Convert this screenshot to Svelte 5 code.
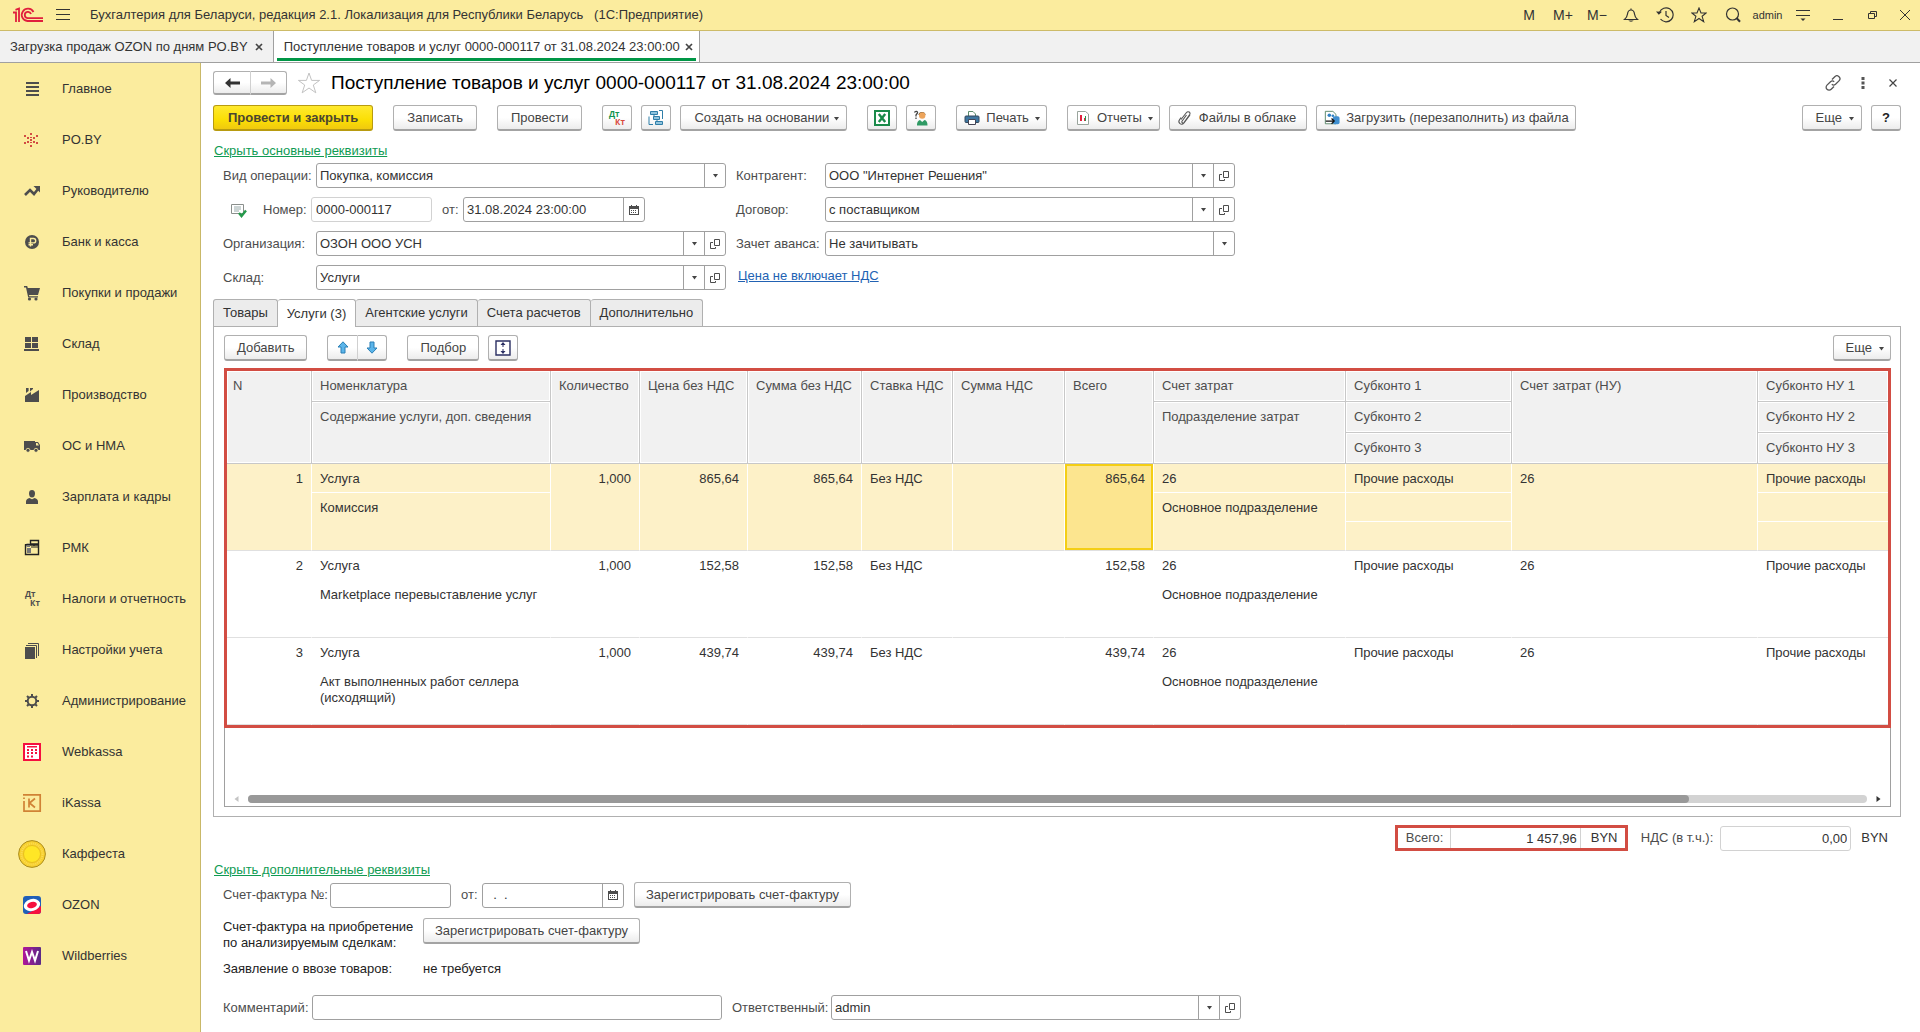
<script>
  const menu = [
    ['main', 'Главное'],
    ['po', 'PO.BY'],
    ['trend', 'Руководителю'],
    ['ruble', 'Банк и касса'],
    ['cart', 'Покупки и продажи'],
    ['stock', 'Склад'],
    ['factory', 'Производство'],
    ['truck', 'ОС и НМА'],
    ['person', 'Зарплата и кадры'],
    ['pos', 'РМК'],
    ['dtkt', 'Налоги и отчетность'],
    ['books', 'Настройки учета'],
    ['gear', 'Администрирование'],
    ['webkassa', 'Webkassa'],
    ['ikassa', 'iKassa'],
    ['coin', 'Каффеста'],
    ['ozon', 'OZON'],
    ['wb', 'Wildberries'],
  ];

  const tabs = ['Товары', 'Услуги (3)', 'Агентские услуги', 'Счета расчетов', 'Дополнительно'];
  let active = $state(1);

  const rows = [
    { n: 1, text: 'Комиссия', sum: '865,64' },
    { n: 2, text: 'Marketplace перевыставление услуг', sum: '152,58' },
    { n: 3, text: 'Акт выполненных работ селлера (исходящий)', sum: '439,74' },
  ];
  let selected = $state(1);
</script>

{#snippet icon(name)}
  {#if name === 'main'}
    <svg width="28" height="28" viewBox="0 0 28 28"><path fill="#4d4d4d" d="M8 7h13v2H8zM8 11h13v2H8zM8 15h13v2H8zM8 19h13v2H8z" /></svg>
  {:else if name === 'po'}
    <svg width="28" height="28" viewBox="0 0 28 28" fill="#d24d43"><path d="M12 7h2v2h-2zM12 11h2v1h-2zM12 13h2v2h-2zM12 16h2v1h-2zM12 19h2v2h-2zM9 11h2v2H9zM15 11h2v2h-2zM9 15h2v2H9zM15 15h2v2h-2zM6 9h2v2H6zM18 9h2v2h-2zM6 16h2v2H6zM18 16h2v2h-2z" /></svg>
  {:else if name === 'trend'}
    <svg width="28" height="28" viewBox="0 0 28 28"><path fill="none" stroke="#4d4d4d" stroke-width="2.600" d="M7 18l5-5 4 4 4-5" /><path fill="#4d4d4d" d="M15.500 9H22v6.500z" /></svg>
  {:else if name === 'ruble'}
    <svg width="28" height="28" viewBox="0 0 28 28"><circle cx="14" cy="14" r="7" fill="#4d4d4d" /><path fill="none" stroke="#fbec9e" stroke-width="1.400" d="M12.500 18.500v-8h3a2.200 2.200 0 010 4.400h-5M10.500 16.700h4.500" /></svg>
  {:else if name === 'cart'}
    <svg width="28" height="28" viewBox="0 0 28 28"><path fill="#4d4d4d" d="M6 7h3.200l.6 2H22l-2 7H11l.3 1.200H20v1.300h-9.800L8 8.500H6z" /><circle cx="11.500" cy="20" r="1.600" fill="#4d4d4d" /><circle cx="18" cy="20" r="1.600" fill="#4d4d4d" /></svg>
  {:else if name === 'stock'}
    <svg width="28" height="28" viewBox="0 0 28 28"><path fill="#4d4d4d" d="M7 7h6v5H7zM14 7h6v5h-6zM7 13h6v5H7zM14 13h6v5h-6zM6 19h15v2H6z" /></svg>
  {:else if name === 'factory'}
    <svg width="28" height="28" viewBox="0 0 28 28"><path fill="#4d4d4d" d="M7 21v-6l6-4v3l8-5v12zM8 7h2.600v3L8 12zM12 7h3v1l-3 2.500z" /></svg>
  {:else if name === 'truck'}
    <svg width="28" height="28" viewBox="0 0 28 28"><path fill="#4d4d4d" fill-rule="evenodd" d="M6 9h11v1h3l2 3v5H6zM18 11v2.500h3L19.500 11z" /><circle cx="10" cy="18.300" r="2" fill="#4d4d4d" stroke="#fbec9e" stroke-width=".8" /><circle cx="18" cy="18.300" r="2" fill="#4d4d4d" stroke="#fbec9e" stroke-width=".8" /></svg>
  {:else if name === 'person'}
    <svg width="28" height="28" viewBox="0 0 28 28"><path fill="#4d4d4d" d="M14 7c2 0 3 1.300 3 3.400S16 14.600 14 14.600s-3-2-3-4.200S12 7 14 7zM8 21v-2.500C8 16.500 9.500 15.500 11.500 15l2.500 1.300 2.500-1.300c2 .5 3.500 1.500 3.500 3.500V21z" /></svg>
  {:else if name === 'pos'}
    <svg width="28" height="28" viewBox="0 0 28 28"><path fill="#fbec9e" stroke="#222" stroke-width="1.400" d="M12.500 6.500h8V10h-8zM7.500 11h13v9.500h-13zM16 10v2" /><path fill="#777" d="M8.500 9.500H12V13H8.500zM9 14h4v5H9z" /><path stroke="#222" stroke-width="1" d="M7 10.500h5M13 13h7" /></svg>
  {:else if name === 'dtkt'}
    <svg width="28" height="28" viewBox="0 0 28 28" font-family="Open Sans, sans-serif" font-weight="700" font-size="8" fill="#4d4d4d"><text x="7" y="12">Дт</text><text x="12" y="21">Кт</text></svg>
  {:else if name === 'books'}
    <svg width="28" height="28" viewBox="0 0 28 28"><path fill="#4d4d4d" d="M7 11h10v12H7z" /><path fill="none" stroke="#4d4d4d" d="M8 9.500h10.500V22M10 7.500h10.500V20" /></svg>
  {:else if name === 'gear'}
    <svg width="28" height="28" viewBox="0 0 28 28"><circle cx="14" cy="14" r="4.300" fill="none" stroke="#4d4d4d" stroke-width="2" /><path stroke="#4d4d4d" stroke-width="2" d="M14 7v2.500M14 18.500V21M7 14h2.500M18.500 14H21M9 9l1.800 1.800M17.200 17.200L19 19M19 9l-1.800 1.800M10.800 17.200L9 19" /></svg>
  {:else if name === 'webkassa'}
    <svg width="28" height="28" viewBox="0 0 28 28"><path fill="#fff" stroke="#f5103f" stroke-width="2" d="M6 6h16v16H6z" /><path fill="#f5103f" d="M9 8h10v1.500H9zM9 11h2v2H9zM13 11h2v2h-2zM17 11h2v2h-2zM9 14h2v2H9zM13 14h2v2h-2zM17 14h2v2h-2zM9 17.500h2v2H9zM13 17.500h2v2h-2z" /></svg>
  {:else if name === 'ikassa'}
    <svg width="28" height="28" viewBox="0 0 28 28"><path fill="none" stroke="#d08235" stroke-width="1.700" d="M5 5.800h17.200v16.400H6V12M6 10V8.500M11 9.500v9M17 9.500l-5.500 4.500 5.500 4.500" /></svg>
  {:else if name === 'coin'}
    <svg width="28" height="28" viewBox="0 0 28 28"><circle cx="14" cy="14" r="13.400" fill="#f7cf2e" stroke="#ab8d20" /><circle cx="14" cy="14" r="10.500" fill="none" stroke="#fbdc55" stroke-width="2" stroke-dasharray="1 1" /><circle cx="14" cy="14" r="8.500" fill="#ffe626" stroke="#e8bf20" /></svg>
  {:else if name === 'ozon'}
    <svg width="28" height="28" viewBox="0 0 28 28"><rect x="5" y="5" width="18" height="18" rx="3" fill="#1f5fb8" /><path fill="#f5103f" d="M23 15v5a3 3 0 01-3 3H9z" /><ellipse cx="14" cy="14" rx="8.300" ry="6" fill="#fff" transform="rotate(-15 14 14)" /><ellipse cx="14" cy="14" rx="5" ry="3" fill="#f5103f" transform="rotate(-15 14 14)" /></svg>
  {:else if name === 'wb'}
    <svg width="28" height="28" viewBox="0 0 28 28"><defs><linearGradient id="wbg"><stop offset="0" stop-color="#b0159a" /><stop offset="1" stop-color="#5a2a86" /></linearGradient></defs><rect x="5" y="5" width="18" height="18" rx="1" fill="url(#wbg)" /><path fill="none" stroke="#fff" stroke-width="2" d="M8 9l3 9.500L14 10l3 8.500L20 9" /></svg>
  {/if}
{/snippet}

{#snippet cross()}
  <svg width="8" height="8" viewBox="0 0 8 8"><path stroke="#444" stroke-width="1.700" d="M1 1l6 6M7 1L1 7" /></svg>
{/snippet}

{#snippet caret()}
  <svg class="caret" width="7" height="4" viewBox="0 0 7 4"><path fill="#444" d="M1 0h5L3.500 3.500z" /></svg>
{/snippet}

{#snippet openIcon()}
  <svg width="10" height="10" viewBox="0 0 10 10"><path fill="none" stroke="#4d4d4d" d="M4.500.5h5v6h-5zM3 3.500H.5v6h5V8" /></svg>
{/snippet}

{#snippet calendar()}
  <svg width="10" height="10" viewBox="0 0 10 10"><path fill="#4d4d4d" fill-rule="evenodd" d="M0 1h2V0h1v1h4V0h1v1h2v9H0zM1 4v5h8V4z" /><path fill="#4d4d4d" d="M2 5h1v1H2zM4 5h1v1H4zM6 5h1v1H6zM2 7h1v1H2zM4 7h1v1H4zM6 7h1v1H6z" /></svg>
{/snippet}

{#snippet pick(id, value, open)}
  <div class="field">
    <div class="pick">
      <select {id}><option>{value}</option></select>
      <span class="cell">{@render caret()}</span>
    </div>
    {#if open}
      <button class="cell" aria-label="Открыть">{@render openIcon()}</button>
    {/if}
  </div>
{/snippet}

<div class="app">
  <header class="titlebar">
    <svg class="logo" width="30" height="16" viewBox="0 0 30 16" fill="none" stroke="#e01f3d" stroke-width="1.800"><path d="M0 5.500h3V15M2.500 2.800L6 1.500V15" /><path d="M20.500 5A6.200 6.200 0 1014.500 14H30M18 7a3.200 3.200 0 10-3.500 4.200H30" /></svg>
    <button class="plain burger" aria-label="Меню">
      <svg width="16" height="14" viewBox="0 0 16 14"><path stroke="#333" d="M1 1.500h14M1 6.500h14M1 11.500h14" /></svg>
    </button>
    <span class="apptitle">Бухгалтерия для Беларуси, редакция 2.1. Локализация для Республики Беларусь &nbsp;&nbsp;(1С:Предприятие)</span>
    <div class="tools">
      <button class="plain">M</button>
      <button class="plain">M+</button>
      <button class="plain">M−</button>
      <button class="plain" aria-label="Уведомления"><svg width="16" height="16" viewBox="0 0 16 16"><path fill="none" stroke="#333" stroke-width="1.200" d="M1.500 12.500h13c-2-1.700-2.700-2.800-3-5.500-.3-2.500-1.500-4-3.500-4s-3.200 1.500-3.500 4c-.3 2.700-1 3.800-3 5.500zM8 3V1.500" /><path fill="#333" d="M5.500 13.500h5c-.5 1.500-4.500 1.500-5 0z" /></svg></button>
      <button class="plain" aria-label="История"><svg width="18" height="16" viewBox="0 0 18 16"><path fill="none" stroke="#333" stroke-width="1.200" d="M3.500 5.500a7 7 0 111 6.500M10 4v4.500l3 2" /><path fill="#333" d="M0 4.500l6 .3-3.200 3z" /></svg></button>
      <button class="plain" aria-label="Избранное"><svg width="16" height="16" viewBox="0 0 16 16"><path fill="none" stroke="#333" stroke-width="1.100" d="M8 1l2 5h5.200l-4.100 3.300 1.600 5.400L8 11.500l-4.700 3.200 1.600-5.400L.8 6H6z" /></svg></button>
      <button class="plain" aria-label="Поиск"><svg width="16" height="16" viewBox="0 0 16 16"><circle cx="7.500" cy="7" r="6" fill="none" stroke="#333" stroke-width="1.200" /><path stroke="#333" stroke-width="2" d="M11.500 11l3.500 3.800" /></svg></button>
    </div>
    <div class="tools wide">
      <button class="plain user">admin</button>
      <button class="plain" aria-label="Настройки"><svg width="16" height="14" viewBox="0 0 16 14"><path stroke="#333" d="M1 2.500h14M1 7.500h14" /><path fill="#333" d="M5.500 10.500h5L8 13z" /></svg></button>
      <button class="plain" aria-label="Свернуть"><svg width="12" height="12" viewBox="0 0 12 12"><path stroke="#333" d="M1 10.500h10" /></svg></button>
      <button class="plain" aria-label="Восстановить"><svg width="10" height="10" viewBox="0 0 10 10"><path fill="none" stroke="#333" d="M.5 3.500h6v5h-6zM2.500 3V1.500h6v5H7" /></svg></button>
      <button class="plain last" aria-label="Закрыть"><svg width="12" height="12" viewBox="0 0 12 12"><path stroke="#333" d="M1 1l10 10M11 1L1 11" /></svg></button>
    </div>
  </header>

  <nav class="wintabs">
    <div class="wintab"><a href="#ozon">Загрузка продаж OZON по дням PO.BY</a><button class="plain close" aria-label="Закрыть вкладку">{@render cross()}</button></div>
    <div class="wintab current"><a href="#doc">Поступление товаров и услуг 0000-000117 от 31.08.2024 23:00:00</a><button class="plain close" aria-label="Закрыть вкладку">{@render cross()}</button></div>
  </nav>

  <div class="body">
    <nav class="side">
      {#each menu as [name, label]}
        <a href="#{name}"><span class="ico">{@render icon(name)}</span>{label}</a>
      {/each}
    </nav>

    <main>
      <div class="head">
        <div class="split">
          <button aria-label="Назад"><svg width="15" height="10" viewBox="0 0 15 10"><path fill="#333" d="M0 5l5.500-5v3.500H15v3H5.500V10z" /></svg></button>
          <button aria-label="Вперед"><svg width="15" height="10" viewBox="0 0 15 10"><path fill="#b5b5b5" d="M15 5L9.500 0v3.500H0v3h9.500V10z" /></svg></button>
        </div>
        <button class="plain star" aria-label="В избранное"><svg width="24" height="24" viewBox="0 0 24 24"><path fill="none" stroke="#c2c2c2" d="M12 2l2.600 7.400h8L16.300 14l2.500 7.800L12 17l-6.800 4.800L7.700 14 1.400 9.400h8z" /></svg></button>
        <h1>Поступление товаров и услуг 0000-000117 от 31.08.2024 23:00:00</h1>
        <div class="headtools">
          <button class="plain" aria-label="Ссылка"><svg width="16" height="16" viewBox="0 0 16 16"><path fill="none" stroke="#555" stroke-width="1.300" d="M7 4.500l2.800-2.800a2.800 2.800 0 014.200 4.200L10.500 9.300a2.800 2.800 0 01-3.700 0M9 11.500l-2.800 2.800A2.800 2.800 0 012 10.100l3.500-3.400a2.800 2.800 0 013.700 0" /></svg></button>
          <button class="plain" aria-label="Меню формы"><svg width="4" height="12" viewBox="0 0 4 12"><path fill="#555" d="M.5 0h3v3h-3zM.5 4.500h3v3h-3zM.5 9h3v3h-3z" /></svg></button>
          <button class="plain" aria-label="Закрыть форму"><svg width="8" height="8" viewBox="0 0 8 8"><path stroke="#444" stroke-width="1.200" d="M.5.5l7 7M7.500.5l-7 7" /></svg></button>
        </div>
      </div>

      <div class="bar">
        <button class="btn primary">Провести и закрыть</button>
        <button class="btn">Записать</button>
        <button class="btn">Провести</button>
        <div class="group">
          <button class="btn sq" aria-label="Показать проводки"><svg width="18" height="18" viewBox="0 0 18 18" font-family="Open Sans, sans-serif" font-weight="700" font-size="8"><text x="1" y="8" fill="#12934f">Дт</text><text x="7" y="16" fill="#d9483b">Кт</text></svg></button>
          <button class="btn sq" aria-label="Структура подчиненности"><svg width="16" height="16" viewBox="0 0 16 16" fill="#8fc3dd" stroke="#2f7ea8"><path d="M2.500 1.500h7v3h-7zM5.500 6.500h6v3h-6zM7.500 11.500h7v3h-7z" /><path fill="none" d="M1 6.500v8h4M11 .5h3.500V9M6 4.500v2M9 9.500v2" /></svg></button>
          <button class="btn">Создать на основании {@render caret()}</button>
        </div>
        <div class="group">
          <button class="btn sq" aria-label="Excel"><svg width="16" height="16" viewBox="0 0 16 16"><path fill="#fff" stroke="#1a8a4a" stroke-width="2" d="M1 1h14v14H1z" /><path stroke="#1a8a4a" stroke-width="2.400" d="M4.800 4l6.400 8M11.200 4l-6.400 8" /></svg></button>
          <button class="btn sq" aria-label="Помощник"><svg width="16" height="16" viewBox="0 0 16 16"><path fill="none" stroke="#444" stroke-width="1.300" d="M1.500 2.500C2 1 5 1 4.500 3L3 5v1.500M3 7.500V9" /><path fill="#4a3a20" d="M5.500 5c0-4 7-4 7 0z" /><circle cx="9.200" cy="5.500" r="3.200" fill="#eda45b" /><path fill="#2f9a64" d="M4 15.500c0-4 1.500-5 3-5.500l2.200 2L11.500 10c2 .5 3 2 3 5.500z" /></svg></button>
        </div>
        <button class="btn pic"><svg width="16" height="16" viewBox="0 0 16 16"><path fill="#fff" stroke="#5d8c6c" d="M4.500 6V1.500H9L11.500 4v2" /><rect x="1" y="6" width="14" height="6.500" rx="1" fill="#3e77a0" stroke="#34495e" /><path fill="#fff" stroke="#445" d="M4.500 9.500h7v5h-7z" /></svg>Печать {@render caret()}</button>
        <div class="group">
          <button class="btn pic"><svg width="16" height="16" viewBox="0 0 16 16"><path fill="#fff" stroke="#9aa59d" d="M2.500 1.500h8L13.500 4v10.500h-11z" /><path fill="#e0213c" d="M5 5h1v6H5zM9 8h2v3H9z" /><path fill="#209a4c" d="M10 6h1v5h-1z" /><path fill="#e0213c" d="M6 5h1v6H6z" /></svg>Отчеты {@render caret()}</button>
          <button class="btn pic"><svg width="16" height="16" viewBox="0 0 14 16"><path fill="none" stroke="#555" stroke-width="1.100" d="M3 9.500l5.500-7c1.500-1.800 4.500 0 3.200 2L6 12.500c-1 1.200-2.800 0-2-1.200L8.500 5M3 7.500l-1.500 2.300c-2 3 1.800 6.200 4.500 3.200l6-8" /></svg>Файлы в облаке</button>
          <button class="btn pic load"><svg width="16" height="16" viewBox="0 0 18 16"><path fill="#fff" stroke="#4f8060" d="M1.500.5H10L13.500 4v10.500h-12z" /><circle cx="6" cy="5" r="2" fill="#3182c4" /><circle cx="10" cy="5.500" r="1.500" fill="#3182c4" /><rect x="10" y="6" width="7.500" height="9" rx="2" fill="#3f8fd0" /><path fill="none" stroke="#111" stroke-width="1.400" d="M2 11.500h9M8.500 8.500l3 3-3 3" /></svg>Загрузить (перезаполнить) из файла</button>
        </div>
        <div class="group push">
          <button class="btn">Еще {@render caret()}</button>
          <button class="btn sq help">?</button>
        </div>
      </div>

      <a class="toggle" href="#main-fields">Скрыть основные реквизиты</a>

      <div class="form">
        <label for="op">Вид операции:</label>
        {@render pick('op', 'Покупка, комиссия', false)}
        <label for="agent" class="second">Контрагент:</label>
        {@render pick('agent', 'ООО "Интернет Решения"', true)}

        <div class="numline">
          <svg width="16" height="16" viewBox="0 0 16 16"><path fill="#fff" stroke="#8a8f8c" d="M.5 2.500h12v9H.500z" /><path stroke="#9aa" d="M3 5h7M3 7h7M3 9h5" /><path fill="none" stroke="#259a4b" stroke-width="2.400" d="M8 11l2.500 3L15 8.500" /></svg>
          <label for="num">Номер:</label>
          <input id="num" class="box soft num" value="0000-000117" readonly />
          <label for="dt">от:</label>
          <div class="field date"><input id="dt" value="31.08.2024 23:00:00" /><button class="cell" aria-label="Выбрать дату">{@render calendar()}</button></div>
        </div>
        <label for="contract" class="second">Договор:</label>
        {@render pick('contract', 'с поставщиком', true)}

        <label for="org">Организация:</label>
        {@render pick('org', 'ОЗОН ООО УСН', true)}
        <label for="adv" class="second">Зачет аванса:</label>
        {@render pick('adv', 'Не зачитывать', false)}

        <label for="wh">Склад:</label>
        {@render pick('wh', 'Услуги', true)}
        <a class="price" href="#price">Цена не включает НДС</a>
      </div>

      <div class="tabs" role="tablist">
        {#each tabs as t, i}
          <button role="tab" aria-selected={active === i} class:on={active === i} onclick={() => (active = i)}>{t}</button>
        {/each}
      </div>

      <section class="panel">
        <div class="bar inner">
          <button class="btn">Добавить</button>
          <div class="split tall">
            <button aria-label="Вверх"><svg width="12" height="13" viewBox="0 0 12 13"><path fill="#5bb5ea" stroke="#2a7fb5" d="M6 .8l5 5.200H8v6H4V6H1z" /></svg></button>
            <button aria-label="Вниз"><svg width="12" height="13" viewBox="0 0 12 13"><path fill="#5bb5ea" stroke="#2a7fb5" d="M6 12.200L1 7h3V1h4v6h3z" /></svg></button>
          </div>
          <div class="group">
            <button class="btn">Подбор</button>
            <button class="btn sq" aria-label="Высота строк"><svg width="16" height="16" viewBox="0 0 16 16"><path fill="#fff" stroke="#2b2f63" stroke-width="1.400" d="M1 1h14v14H1z" /><path fill="#2b2f63" d="M8 2l2.500 3h-5zM8 14l2.500-3h-5zM7.500 5h1v2h-1zM7.500 9h1v2h-1z" /></svg></button>
          </div>
          <button class="btn push">Еще {@render caret()}</button>
        </div>

        <div class="list">
          <div class="frame">
            <table>
              <colgroup>
                <col class="c1" /><col class="c2" /><col class="c3" /><col class="c4" /><col class="c5" /><col class="c6" /><col class="c7" /><col class="c8" /><col class="c9" /><col class="c10" /><col /><col class="c12" />
              </colgroup>
              <thead>
                <tr>
                  <th rowspan="3">N</th><th>Номенклатура</th><th rowspan="3">Количество</th><th rowspan="3">Цена без НДС</th><th rowspan="3">Сумма без НДС</th><th rowspan="3">Ставка НДС</th><th rowspan="3">Сумма НДС</th><th rowspan="3">Всего</th><th>Счет затрат</th><th>Субконто 1</th><th rowspan="3">Счет затрат (НУ)</th><th>Субконто НУ 1</th>
                </tr>
                <tr><th rowspan="2">Содержание услуги, доп. сведения</th><th rowspan="2">Подразделение затрат</th><th>Субконто 2</th><th>Субконто НУ 2</th></tr>
                <tr><th>Субконто 3</th><th>Субконто НУ 3</th></tr>
              </thead>
              {#each rows as r}
                <tbody class:sel={selected === r.n} onclick={() => (selected = r.n)}>
                  <tr>
                    <td rowspan="3" class="r">{r.n}</td><td>Услуга</td><td rowspan="3" class="r">1,000</td><td rowspan="3" class="r">{r.sum}</td><td rowspan="3" class="r">{r.sum}</td><td rowspan="3">Без НДС</td><td rowspan="3"></td><td rowspan="3" class="r total">{r.sum}</td><td>26</td><td>Прочие расходы</td><td rowspan="3">26</td><td>Прочие расходы</td>
                  </tr>
                  <tr><td rowspan="2">{r.text}</td><td rowspan="2">Основное подразделение</td><td></td><td></td></tr>
                  <tr><td></td><td></td></tr>
                </tbody>
              {/each}
            </table>
          </div>
          <div class="scroll">
            <svg width="5" height="8" viewBox="0 0 5 8"><path fill="#c4c4c4" d="M4.500 1v6L.5 4z" /></svg>
            <div class="track"><div class="thumb"></div></div>
            <svg width="5" height="8" viewBox="0 0 5 8"><path fill="#333" d="M.5 1v6l4-3z" /></svg>
          </div>
        </div>
      </section>

      <div class="totals">
        <div class="redbox"><label for="sum">Всего:</label><input id="sum" value="1 457,96" readonly /><span>BYN</span></div>
        <label for="vat">НДС (в т.ч.):</label>
        <input id="vat" class="box soft vat" value="0,00" readonly />
        <span class="cur">BYN</span>
      </div>

      <a class="toggle extra" href="#extra-fields">Скрыть дополнительные реквизиты</a>

      <div class="line inv">
        <label class="l1" for="inv">Счет-фактура №:</label>
        <input id="inv" class="box num" />
        <label class="from" for="invdt">от:</label>
        <div class="field short"><input id="invdt" value="&nbsp;&nbsp;.&nbsp;&nbsp;." /><button class="cell" aria-label="Выбрать дату">{@render calendar()}</button></div>
        <button class="btn reg">Зарегистрировать счет-фактуру</button>
      </div>
      <div class="line buy">
        <span class="dark l2">Счет-фактура на приобретение<br />по анализируемым сделкам:</span>
        <button class="btn long">Зарегистрировать счет-фактуру</button>
      </div>
      <div class="line import"><span class="dark l2">Заявление о ввозе товаров:</span><span class="dark">не требуется</span></div>
      <div class="line last-line">
        <label class="l3" for="com">Комментарий:</label>
        <input id="com" class="box com" />
        <label class="l4" for="resp">Ответственный:</label>
        {@render pick('resp', 'admin', true)}
      </div>
    </main>
  </div>
</div>

<style>
  :global(body) { margin: 0; }
  .app {
    min-height: 100vh;
    display: flex;
    flex-direction: column;
    background: #fff;
    color: #333;
    font: 13px/16px "Liberation Sans", Arial, sans-serif;
  }
  button, input, select { font: inherit; color: inherit; box-sizing: border-box; margin: 0; }
  svg { display: block; flex: none; }
  .plain { border: 0; background: none; padding: 0; display: flex; align-items: center; justify-content: center; }

  .titlebar { display: flex; align-items: center; height: 30px; background: #fbec9e; border-bottom: 1px solid #cdbb68; }
  .logo { margin-left: 13px; }
  .burger { margin: 0 19px 0 12px; }
  .tools { margin-left: auto; display: flex; }
  .tools button { width: 34px; height: 30px; font-size: 14px; }
  .tools.wide { margin-left: 0; }
  .tools.wide button { width: 35px; }
  .tools.wide .last { width: 30px; }
  .tools .user { font-size: 11px; }

  .wintabs { display: flex; height: 31px; background: #f1f1f1; border-bottom: 1px solid #a0a0a0; }
  .wintab { display: flex; align-items: center; gap: 7px; padding: 0 10px; border-right: 1px solid #a0a0a0; }
  .wintab a { color: #333; text-decoration: none; }
  .wintab.current { gap: 5px; padding: 0 6px 0 10px; background: linear-gradient(#009646, #009646) 50% 27px / calc(100% - 6px) 3px no-repeat #fff; }
  .close { width: 8px; height: 16px; }

  .body { flex: 1; display: flex; }
  .side { width: 200px; flex: none; background: #fbec9e; border-right: 1px solid #c9b868; }
  .side a { display: flex; align-items: center; height: 51px; color: #333; text-decoration: none; white-space: nowrap; }
  .ico { width: 28px; margin: 0 16px 0 18px; }

  main { flex: 1; min-width: 0; padding: 8px 19px 10px 12px; }
  .head { display: flex; align-items: center; height: 24px; }
  .split { display: flex; }
  .split button, .btn {
    display: flex; align-items: center; justify-content: center; padding: 0;
    border: 1px solid #b0b0b0; border-bottom: 2px solid #a3a3a3; border-radius: 3px;
    background: linear-gradient(#fff 50%, #ececec); color: #444; white-space: nowrap;
  }
  .split button { width: 37px; height: 24px; }
  .split button:first-child { border-radius: 3px 0 0 3px; border-right: 0; }
  .split button:last-child { border-radius: 0 3px 3px 0; border-left-color: #d0d0d0; }
  .split.tall button { width: 30px; height: 26px; }
  .star { margin-left: 10px; }
  h1 { margin: 0 0 0 10px; font-size: 19px; line-height: 24px; font-weight: 400; color: #000; white-space: nowrap; }
  .headtools { margin-left: auto; margin-right: -7px; display: flex; }
  .headtools button { width: 30px; height: 24px; }

  .bar { display: flex; gap: 20px; margin-top: 10px; }
  .group { display: flex; gap: 9px; }
  .push { margin-left: auto; }
  .btn { height: 26px; padding: 1px 13px 0; }
  .btn.pic { padding: 1px 10px 0 7px; gap: 6px; }
  .btn.load { padding-right: 6px; }
  .btn.sq { width: 30px; padding: 0; }
  .btn .caret { margin: 1px -7px 0 4px; }
  .btn.pic .caret { margin: 1px -5px 0 -1px; }
  .btn.primary { padding: 1px 14px 0; background: linear-gradient(#ffe92f, #fbdf05 60%, #f0c90f); border-color: #b89b10; font-weight: 700; color: #4a4530; }
  .btn.help { font-weight: 700; color: #222; }
  .push .caret, .btn.push .caret { margin-left: 6px; }

  .toggle { display: block; width: max-content; margin: 12px 0 0 1px; color: #109b53; }
  .form {
    display: grid; grid-template-columns: 93px 410px 99px 410px; grid-auto-rows: 25px; row-gap: 9px;
    align-items: center; margin: 4px 0 0 10px;
  }
  label { color: #4d4d4d; white-space: nowrap; }
  .second { padding-left: 10px; }
  .price { grid-column: span 2; padding: 0 0 4px 12px; color: #2262b3; }
  .field { display: flex; height: 25px; box-sizing: border-box; border: 1px solid #a0a0a0; border-radius: 3px; background: #fff; }
  .pick { flex: 1; display: grid; }
  .pick select { grid-area: 1 / 1; width: 100%; appearance: none; border: 0; background: none; padding: 0 24px 0 3px; }
  .pick .cell { grid-area: 1 / 1; justify-self: end; pointer-events: none; }
  .cell { display: flex; align-items: center; justify-content: center; width: 21px; box-sizing: border-box; padding: 0; border: 0; border-left: 1px solid #a0a0a0; background: none; }
  .field input { flex: 1; min-width: 0; border: 0; background: none; padding: 0 3px; }
  .numline { grid-column: span 2; display: flex; align-items: center; padding-left: 8px; }
  .numline label:nth-of-type(1) { width: 48px; margin-left: 16px; }
  .numline label:nth-of-type(2) { width: 21px; margin-left: 10px; }
  .box { height: 25px; border: 1px solid #a0a0a0; border-radius: 3px; background: #fff; padding: 0 4px; }
  .soft { border-color: #d2d2d2; }
  .num { width: 121px; }
  .date { width: 182px; }

  .tabs { display: flex; margin-top: 9px; }
  .tabs button { height: 27px; padding: 0 9px; border: 1px solid #b0b0b0; border-bottom: 0; border-left-width: 0; background: #ececec; border-radius: 3px 3px 0 0; }
  .tabs button:first-child { border-left-width: 1px; }
  .tabs button.on { background: #fff; height: 28px; margin-bottom: -1px; }
  .panel { border: 1px solid #b0b0b0; padding: 8px 9px 9px 10px; }
  .bar.inner { margin: 0; }
  .inner .btn:not(.sq) { padding: 1px 12px 0; }

  .list { margin-top: 7px; border: 1px solid #a0a0a0; padding-bottom: 3px; }
  .frame { margin: -1px; border: 3px solid #d24d43; overflow: hidden; }
  table { width: 100%; table-layout: fixed; border-collapse: separate; border-spacing: 0; }
  .c1 { width: 85px; } .c2 { width: 239px; } .c3 { width: 89px; } .c4 { width: 108px; }
  .c5 { width: 114px; } .c6 { width: 91px; } .c7 { width: 112px; } .c8 { width: 89px; }
  .c9 { width: 192px; } .c10 { width: 166px; } .c12 { width: 130px; }
  th, td { box-sizing: border-box; padding: 7px 7px 0 8px; text-align: left; vertical-align: top; font-weight: 400; }
  th { height: 31px; background: #f1f1f1; color: #4d4d4d; border-right: 1px solid #c8c8c8; border-bottom: 1px solid #c8c8c8; box-shadow: inset -1px -1px #fff, inset 1px 1px #fff; white-space: nowrap; }
  td { height: 29px; border-right: 1px solid #fff; }
  tr > :last-child { border-right: 0; }
  th:first-child[rowspan="3"], td:first-child[rowspan="3"] { padding-left: 6px; }
  td.r { text-align: right; padding-right: 8px; }
  tbody tr:first-child td[rowspan], tbody tr:nth-child(2) td[rowspan], tbody tr:last-child td { border-bottom: 1px solid #e0e0e0; }
  .sel td { background: #fdf1c8; border-bottom: 1px solid #fff; }
  .sel td.total { background: #fce58f; box-shadow: inset 0 0 0 2px #f4ce15; }
  .scroll { display: flex; align-items: center; gap: 9px; margin: 68px 9px 0; }
  .track { flex: 1; height: 8px; border-radius: 4px; background: #d3d3d3; }
  .thumb { width: 89%; height: 8px; border-radius: 4px; background: #999; }

  .totals { display: flex; align-items: center; justify-content: flex-end; margin-top: 8px; height: 26px; padding-right: 13px; }
  .redbox { display: flex; align-items: center; box-sizing: border-box; width: 233px; height: 26px; border: 3px solid #d24d43; margin-right: 13px; }
  .redbox label { width: 44px; padding-left: 8px; }
  .redbox input { width: 131px; height: 20px; border: 0; border-left: 1px solid #d2d2d2; border-right: 1px solid #d2d2d2; text-align: right; padding: 0 3px; }
  .redbox span { padding-left: 10px; }
  .vat { width: 131px; margin: 0 10px 0 7px; padding: 0 3px; text-align: right; }

  .extra { margin-top: 11px; }
  .line { display: flex; align-items: center; padding-left: 10px; }
  .dark { color: #222; }
  .inv { margin-top: 4px; }
  .l1 { width: 107px; }
  .from { width: 21px; margin-left: 10px; }
  .short { width: 142px; }
  .btn.reg { margin-left: 10px; padding: 1px 11px 0; }
  .btn.long { padding: 1px 11px 0; }
  .buy { margin-top: 10px; align-items: flex-start; }
  .buy .l2 { margin-top: 1px; }
  .l2 { width: 200px; }
  .import { margin-top: 10px; }
  .last-line { margin-top: 18px; }
  .l3 { width: 89px; }
  .com { width: 410px; margin-right: 10px; }
  .l4 { width: 99px; }
  .last-line .field { width: 410px; }
</style>
